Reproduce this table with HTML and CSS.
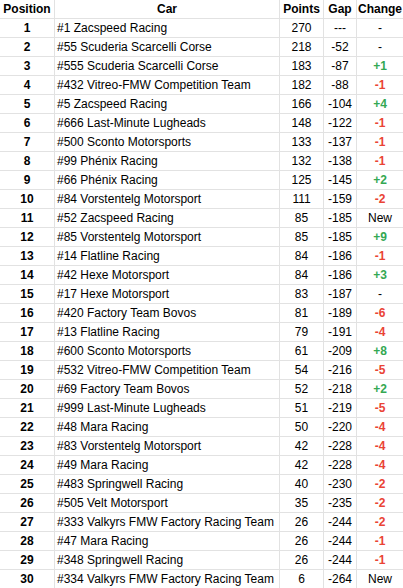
FILE: index.html
```html
<!DOCTYPE html>
<html>
<head>
<meta charset="utf-8">
<link rel="stylesheet" href="styles.css">
</head>
<body>
<div class="board">
  <div class="cell hd">Position</div><div class="cell hd">Car</div><div class="cell hd">Points</div><div class="cell hd">Gap</div><div class="cell hd">Change</div>
  <div class="cell pos">1</div><div class="cell car">#1 Zacspeed Racing</div><div class="cell">270</div><div class="cell">---</div><div class="cell">-</div>
  <div class="cell pos">2</div><div class="cell car">#55 Scuderia Scarcelli Corse</div><div class="cell">218</div><div class="cell">-52</div><div class="cell">-</div>
  <div class="cell pos">3</div><div class="cell car">#555 Scuderia Scarcelli Corse</div><div class="cell">183</div><div class="cell">-87</div><div class="cell up">+1</div>
  <div class="cell pos">4</div><div class="cell car">#432 Vitreo-FMW Competition Team</div><div class="cell">182</div><div class="cell">-88</div><div class="cell down">-1</div>
  <div class="cell pos">5</div><div class="cell car">#5 Zacspeed Racing</div><div class="cell">166</div><div class="cell">-104</div><div class="cell up">+4</div>
  <div class="cell pos">6</div><div class="cell car">#666 Last-Minute Lugheads</div><div class="cell">148</div><div class="cell">-122</div><div class="cell down">-1</div>
  <div class="cell pos">7</div><div class="cell car">#500 Sconto Motorsports</div><div class="cell">133</div><div class="cell">-137</div><div class="cell down">-1</div>
  <div class="cell pos">8</div><div class="cell car">#99 Phénix Racing</div><div class="cell">132</div><div class="cell">-138</div><div class="cell down">-1</div>
  <div class="cell pos">9</div><div class="cell car">#66 Phénix Racing</div><div class="cell">125</div><div class="cell">-145</div><div class="cell up">+2</div>
  <div class="cell pos">10</div><div class="cell car">#84 Vorstentelg Motorsport</div><div class="cell">111</div><div class="cell">-159</div><div class="cell down">-2</div>
  <div class="cell pos">11</div><div class="cell car">#52 Zacspeed Racing</div><div class="cell">85</div><div class="cell">-185</div><div class="cell">New</div>
  <div class="cell pos">12</div><div class="cell car">#85 Vorstentelg Motorsport</div><div class="cell">85</div><div class="cell">-185</div><div class="cell up">+9</div>
  <div class="cell pos">13</div><div class="cell car">#14 Flatline Racing</div><div class="cell">84</div><div class="cell">-186</div><div class="cell down">-1</div>
  <div class="cell pos">14</div><div class="cell car">#42 Hexe Motorsport</div><div class="cell">84</div><div class="cell">-186</div><div class="cell up">+3</div>
  <div class="cell pos">15</div><div class="cell car">#17 Hexe Motorsport</div><div class="cell">83</div><div class="cell">-187</div><div class="cell">-</div>
  <div class="cell pos">16</div><div class="cell car">#420 Factory Team Bovos</div><div class="cell">81</div><div class="cell">-189</div><div class="cell down">-6</div>
  <div class="cell pos">17</div><div class="cell car">#13 Flatline Racing</div><div class="cell">79</div><div class="cell">-191</div><div class="cell down">-4</div>
  <div class="cell pos">18</div><div class="cell car">#600 Sconto Motorsports</div><div class="cell">61</div><div class="cell">-209</div><div class="cell up">+8</div>
  <div class="cell pos">19</div><div class="cell car">#532 Vitreo-FMW Competition Team</div><div class="cell">54</div><div class="cell">-216</div><div class="cell down">-5</div>
  <div class="cell pos">20</div><div class="cell car">#69 Factory Team Bovos</div><div class="cell">52</div><div class="cell">-218</div><div class="cell up">+2</div>
  <div class="cell pos">21</div><div class="cell car">#999 Last-Minute Lugheads</div><div class="cell">51</div><div class="cell">-219</div><div class="cell down">-5</div>
  <div class="cell pos">22</div><div class="cell car">#48 Mara Racing</div><div class="cell">50</div><div class="cell">-220</div><div class="cell down">-4</div>
  <div class="cell pos">23</div><div class="cell car">#83 Vorstentelg Motorsport</div><div class="cell">42</div><div class="cell">-228</div><div class="cell down">-4</div>
  <div class="cell pos">24</div><div class="cell car">#49 Mara Racing</div><div class="cell">42</div><div class="cell">-228</div><div class="cell down">-4</div>
  <div class="cell pos">25</div><div class="cell car">#483 Springwell Racing</div><div class="cell">40</div><div class="cell">-230</div><div class="cell down">-2</div>
  <div class="cell pos">26</div><div class="cell car">#505 Velt Motorsport</div><div class="cell">35</div><div class="cell">-235</div><div class="cell down">-2</div>
  <div class="cell pos">27</div><div class="cell car">#333 Valkyrs FMW Factory Racing Team</div><div class="cell">26</div><div class="cell">-244</div><div class="cell down">-2</div>
  <div class="cell pos">28</div><div class="cell car">#47 Mara Racing</div><div class="cell">26</div><div class="cell">-244</div><div class="cell down">-1</div>
  <div class="cell pos">29</div><div class="cell car">#348 Springwell Racing</div><div class="cell">26</div><div class="cell">-244</div><div class="cell down">-1</div>
  <div class="cell pos">30</div><div class="cell car">#334 Valkyrs FMW Factory Racing Team</div><div class="cell">6</div><div class="cell">-264</div><div class="cell">New</div>
</div>
</body>
</html>
```

FILE: styles.css
```css
html, body {
  margin: 0;
  padding: 0;
  background: #ffffff;
}
.board {
  display: grid;
  grid-template-columns: 54px 224px 43px 32px 46px;
  grid-auto-rows: 18px;
  gap: 1px;
  width: 403px;
  background: #e2e2e2;
  font-family: "Liberation Sans", Arial, sans-serif;
  font-size: 12px;
  color: #000000;
}
.cell {
  background: #ffffff;
  line-height: 18px;
  text-align: center;
  white-space: nowrap;
  overflow: hidden;
}
.hd {
  font-weight: bold;
}
.pos {
  font-weight: bold;
}
.car {
  text-align: left;
  padding-left: 2px;
}
.up {
  color: #34a853;
  font-weight: bold;
}
.down {
  color: #ea4335;
  font-weight: bold;
}
```
